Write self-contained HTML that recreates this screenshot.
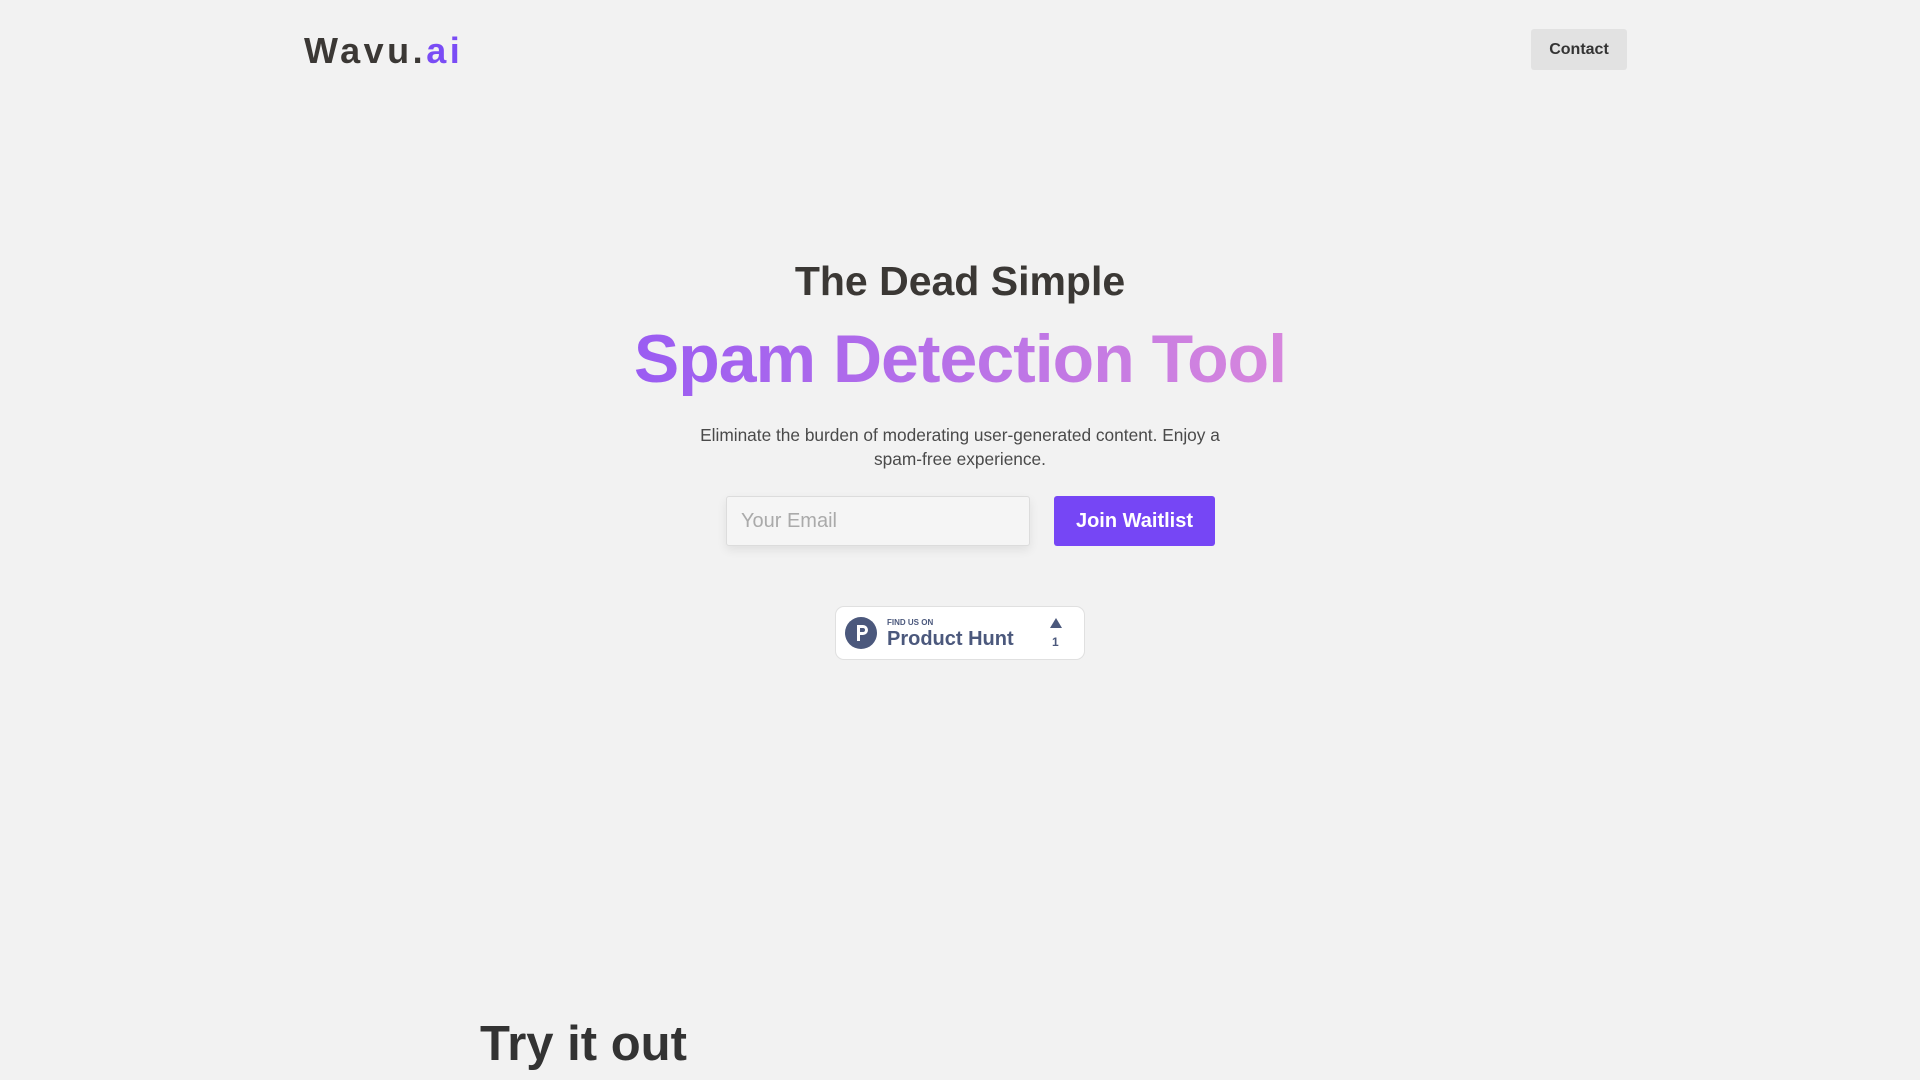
<!DOCTYPE html>
<html><head><meta charset="utf-8"><style>
*{margin:0;padding:0;box-sizing:border-box}
body{width:1920px;height:1080px;background:#f2f2f2;font-family:"Liberation Sans",sans-serif;position:relative;overflow:hidden;color:#3b3835}
.abs{position:absolute}
.logo{left:304px;top:30px;font-size:36px;font-weight:bold;letter-spacing:3.5px;color:#3b3835}
.logo span{color:#7a4cf5}
.contact{left:1531px;top:29px;width:96px;height:41px;background:#e2e2e2;border-radius:3px;font-size:16px;font-weight:bold;text-align:center;line-height:41px;color:#333}
h1{position:absolute;left:0;width:1920px;text-align:center;top:256px;font-size:41px;line-height:50px;color:#3b3835}
h2{position:absolute;left:0;width:1920px;text-align:center;top:319px;font-size:68px;line-height:80px;letter-spacing:-1px}
h2 span{background:linear-gradient(90deg,#9a5cf2,#d787dd);-webkit-background-clip:text;background-clip:text;color:transparent}
p{position:absolute;left:692px;width:536px;text-align:center;top:423px;font-size:17.3px;line-height:24px;color:#4a4a4a}
.inp{left:726px;top:496px;width:304px;height:50px;background:#f5f5f5;border:1px solid #dcdcdc;border-radius:3px;box-shadow:0 4px 10px rgba(0,0,0,.08);font-size:20px;color:#aaa;padding:0 14px;line-height:48px}
.btn{left:1054px;top:496px;width:161px;height:50px;background:#7646f5;border-radius:3px;color:#fff;font-size:20px;font-weight:bold;text-align:center;line-height:50px}
.ph{left:835px;top:606px;width:250px;height:54px;background:#fff;border:1px solid #e0e0e0;border-radius:9px}
.try{left:480px;top:1016px;font-size:49px;font-weight:bold;color:#333}
</style></head><body>
<div class="abs logo">Wavu.<span>ai</span></div>
<div class="abs contact">Contact</div>
<h1>The Dead Simple</h1>
<h2><span>Spam Detection Tool</span></h2>
<p>Eliminate the burden of moderating user-generated content. Enjoy a<br>spam-free experience.</p>
<div class="abs inp">Your Email</div>
<div class="abs btn">Join Waitlist</div>
<div class="abs ph">
 <svg class="abs" style="left:9px;top:10px" width="32" height="32" viewBox="0 0 32 32"><circle cx="16" cy="16" r="16" fill="#4b587c"/><path d="M12 8h6a5 5 0 0 1 0 10h-3v6h-3z M15 11v4h3a2 2 0 0 0 0-4z" fill="#fff" fill-rule="evenodd"/></svg>
 <div class="abs" style="left:51px;top:11px;font-size:8px;font-weight:bold;color:#4b587c">FIND US ON</div>
 <div class="abs" style="left:51px;top:21px;font-size:20px;font-weight:bold;color:#4b587c">Product Hunt</div>
 <div class="abs" style="left:214px;top:11px;width:0;height:0;border-left:6px solid transparent;border-right:6px solid transparent;border-bottom:10px solid #4b587c"></div>
 <div class="abs" style="left:216px;top:28px;font-size:12px;font-weight:bold;color:#4b587c">1</div>
</div>
<div class="abs try">Try it out</div>
</body></html>
